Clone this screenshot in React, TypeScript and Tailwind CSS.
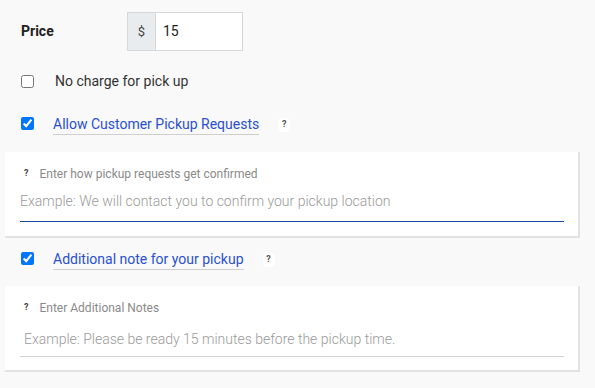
import React from 'react'

function Hint() {
  return (
    <span className="flex h-[14px] w-[12px] items-center justify-center rounded-sm bg-white text-[9px] font-bold text-[#555]">
      ?
    </span>
  )
}

function NoteCard({ label, placeholder, active }: { label: string; placeholder: string; active?: boolean }) {
  return (
    <div className="ml-[5px] h-[86px] w-[575px] border-r-2 border-b-2 border-[#e2e2e2] bg-white pr-[14px] pl-[15px] pt-[14px]">
      <div className="flex h-[16px] items-center gap-[11px] pl-[4px] text-[12px] text-[#8a8a8a]">
        <span className="text-[9px] font-bold text-[#444]">?</span>
        <span>{label}</span>
      </div>
      <div
        className={`mt-[5px] border-b leading-[20px] ${
          active ? 'border-[#1c47a8] pt-[4px] pb-[10px] pl-0' : 'border-[#cfd3d6] pt-[8px] pb-[7px] pl-[4px]'
        } text-[14px] font-light text-[#9a9a9a]`}
      >
        {placeholder}
      </div>
    </div>
  )
}

export default function App() {
  return (
    <div className="h-[388px] w-[595px] bg-[#f9f9f9] font-['Roboto',sans-serif]">
      <div className="flex items-center pt-[12px] pl-[21px]">
        <span className="w-[106px] text-[14px] font-bold text-[#222]">Price</span>
        <div className="flex h-[39px] border border-[#d6d9dc]">
          <span className="flex w-[28px] items-center justify-center border-r border-[#d6d9dc] bg-[#e9ecef] text-[13px] text-[#444]">
            $
          </span>
          <span className="flex w-[86px] items-center bg-white pl-[7px] text-[14px] text-[#222]">15</span>
        </div>
      </div>

      <div className="mt-[20px] flex h-[20px] items-center pl-[21px]">
        <input type="checkbox" className="m-0 h-[13px] w-[13px]" readOnly />
        <span className="ml-[21px] text-[14px] text-[#333]">No charge for pick up</span>
      </div>

      <div className="mt-[22px] flex h-[20px] items-center pl-[21px]">
        <input type="checkbox" checked readOnly className="m-0 h-[13px] w-[13px]" />
        <span className="ml-[19px] mt-[3px] border-b border-[#cfcfcf] pb-[1px] text-[14px] leading-[18px] text-[#2a4fd4]">
          Allow Customer Pickup Requests
        </span>
        <span className="ml-[19px] mt-[4px]">
          <Hint />
        </span>
      </div>

      <div className="mt-[19px]">
        <NoteCard
          label="Enter how pickup requests get confirmed"
          placeholder="Example: We will contact you to confirm your pickup location"
          active
        />
      </div>

      <div className="mt-[10px] flex h-[20px] items-center pl-[21px]">
        <input type="checkbox" checked readOnly className="m-0 h-[13px] w-[13px]" />
        <span className="ml-[19px] mt-[3px] border-b border-[#cfcfcf] pb-[1px] text-[14px] leading-[18px] text-[#2a4fd4]">
          Additional note for your pickup
        </span>
        <span className="ml-[19px] mt-[4px]">
          <Hint />
        </span>
      </div>

      <div className="mt-[18px]">
        <NoteCard
          label="Enter Additional Notes"
          placeholder="Example: Please be ready 15 minutes before the pickup time."
        />
      </div>
    </div>
  )
}
